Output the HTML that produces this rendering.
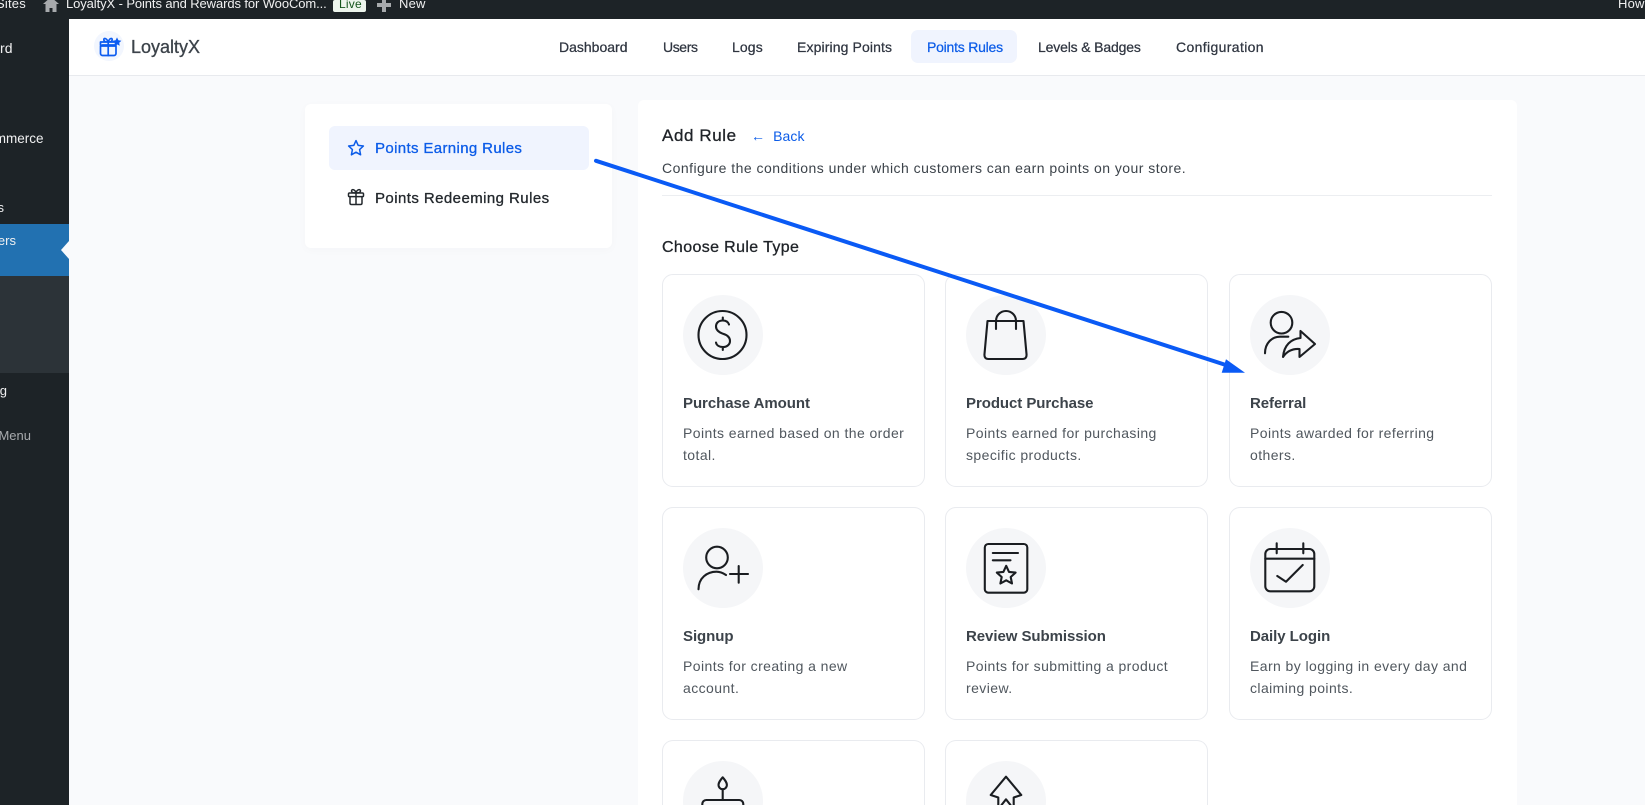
<!DOCTYPE html>
<html lang="en">
<head>
<meta charset="utf-8">
<title>LoyaltyX - Add Rule</title>
<style>
html,body{margin:0;padding:0;width:1645px;height:805px;overflow:hidden;background:#f9fafc;font-family:"Liberation Sans",sans-serif;}
#root{position:relative;width:1645px;height:805px;overflow:hidden;background:#f9fafc;}
.a{position:absolute;white-space:nowrap;}
.ab{position:absolute;left:0;top:0;width:1645px;height:19px;background:#1d2327;overflow:hidden;}
.ab .a{color:#f0f0f1;font-size:13px;line-height:18px;top:-5px;letter-spacing:.2px;}
.side{position:absolute;left:0;top:19px;width:69px;height:786px;background:#1d2327;overflow:hidden;}
.st{position:absolute;white-space:nowrap;color:#f0f0f1;font-size:13px;line-height:18px;right:auto;}
.head{position:absolute;left:69px;top:19px;width:1576px;height:56px;background:#fff;border-bottom:1px solid #e8eaee;}
.nav{position:absolute;top:38px;font-size:14px;line-height:18px;color:#2f3540;white-space:nowrap;-webkit-text-stroke:.25px currentColor;letter-spacing:.12px;}
.pill{position:absolute;left:911px;top:30px;width:106px;height:33px;background:#f0f4fe;border-radius:7px;}
.lcard{position:absolute;left:305px;top:104px;width:307px;height:144px;background:#fff;border-radius:6px;box-shadow:0 2px 10px rgba(30,50,90,.025);}
.lact{position:absolute;left:329px;top:126px;width:260px;height:44px;background:#f0f4fe;border-radius:6px;}
.ltxt{position:absolute;left:375px;font-size:15px;line-height:20px;white-space:nowrap;-webkit-text-stroke:.3px currentColor;letter-spacing:.36px;}
.main{position:absolute;left:638px;top:100px;width:879px;height:705px;background:#fff;border-radius:6px 6px 0 0;}
.card{position:absolute;width:261px;height:211px;background:#fff;border:1px solid #e9ebef;border-radius:11px;}
.card.cut{height:64px;border-bottom:0;border-radius:11px 11px 0 0;overflow:hidden;}
.ic{position:absolute;left:20px;top:20px;width:80px;height:80px;border-radius:50%;background:#f5f6f8;}
.ic svg{position:absolute;left:0;top:0;width:80px;height:80px;fill:none;stroke:#1a1d21;stroke-width:2.1;stroke-linecap:round;stroke-linejoin:round;}
.t{position:absolute;left:20px;top:119px;font-size:15px;line-height:20px;color:#3c434a;font-weight:700;white-space:nowrap;letter-spacing:-.06px;}
.d{position:absolute;left:20px;top:147px;width:240px;font-size:14px;line-height:22px;color:#50575e;letter-spacing:.42px;white-space:nowrap;}
</style>
</head>
<body>
<div id="root">

<div class="ab">
  <span class="a" style="left:-4px;">Sites</span>
  <svg class="a" style="left:43px;top:0;" width="16" height="12" viewBox="0 0 16 12"><path d="M8 -3 L0 4 H2.5 V12 H6.5 V8 H9.5 V12 H13.5 V4 H16 Z" fill="#a7aaad"/></svg>
  <span class="a" style="left:66px;letter-spacing:-.1px;">LoyaltyX - Points and Rewards for WooCom...</span>
  <span class="a" style="left:333px;top:0;width:33px;height:12px;background:#edf5ed;border-radius:2px;"></span>
  <span class="a" style="left:339px;color:#14551c;font-size:12px;">Live</span>
  <svg class="a" style="left:377px;top:0;" width="14" height="12" viewBox="0 0 14 12"><path d="M5 0 H9 V3 H14 V7 H9 V12 H5 V7 H0 V3 H5 Z" fill="#a7aaad"/></svg>
  <span class="a" style="left:399px;">New</span>
  <span class="a" style="left:1618px;">How</span>
</div>

<div class="side">
  <span class="st" style="left:-60px;width:72.5px;text-align:right;top:20px;font-size:14px;">Dashboard</span>
  <span class="st" style="left:-50px;width:92px;text-align:right;top:111px;font-size:13.5px;">WooCommerce</span>
  <span class="st" style="left:-50px;width:54px;text-align:right;top:180px;">Rules</span>
  <div style="position:absolute;left:0;top:205px;width:69px;height:52px;background:#2271b1;"></div>
  <span class="st" style="left:-50px;width:66px;text-align:right;top:213px;">Users</span>
  <div style="position:absolute;left:61px;top:222px;width:0;height:0;border:9px solid transparent;border-left:0;border-right:8px solid #f9fafc;"></div>
  <div style="position:absolute;left:0;top:257px;width:69px;height:97px;background:#2c3338;"></div>
  <span class="st" style="left:-50px;width:57px;text-align:right;top:363px;">Setting</span>
  <span class="st" style="left:-60px;width:91px;text-align:right;top:408px;color:#a7aaad;">Collapse Menu</span>
</div>

<div class="head"></div>
<div class="a" style="left:94px;top:31px;width:30px;height:30px;border-radius:50%;background:#f2f6fe;"></div>
<svg class="a" style="left:96px;top:32px;" width="30" height="28" viewBox="0 0 30 28" fill="none" stroke="#0d5cf0" stroke-width="1.7" stroke-linecap="round" stroke-linejoin="round">
  <rect x="4.5" y="13" width="15.5" height="10.5" rx="2"/>
  <path d="M4.5 13 V10 H20 V13 M4.5 14 H20 M12.2 10 V23.5 M12.2 10 C10 5 7 6 8 8.5 C8.5 10 11 10 12.2 10 C14 5 17 6 16 8.5 C15.5 10 13 10 12.2 10"/>
  <path d="M21 8.4 L22.4 11.2 L25.4 11.7 L23.2 13.8 L23.7 16.8 L21 15.4 L18.3 16.8 L18.8 13.8 L16.6 11.7 L19.6 11.2 Z" fill="#0d5cf0" stroke="none" transform="translate(0 -3)"/>
</svg>
<span class="a" style="left:131px;top:36px;font-size:18px;line-height:22px;color:#3c434a;-webkit-text-stroke:.3px #3c434a;">LoyaltyX</span>

<div class="pill"></div>
<span class="nav" style="left:559px;letter-spacing:0;">Dashboard</span>
<span class="nav" style="left:663px;letter-spacing:-.4px;">Users</span>
<span class="nav" style="left:732px;">Logs</span>
<span class="nav" style="left:797px;">Expiring Points</span>
<span class="nav" style="left:927px;color:#0c5ce8;letter-spacing:-.23px;">Points Rules</span>
<span class="nav" style="left:1038px;letter-spacing:-.16px;">Levels &amp; Badges</span>
<span class="nav" style="left:1176px;letter-spacing:.36px;">Configuration</span>

<div class="lcard"></div>
<div class="lact"></div>
<svg class="a" style="left:347px;top:139px;" width="18" height="18" viewBox="0 0 18 18" fill="none" stroke="#0c5ce8" stroke-width="1.5" stroke-linejoin="round"><path d="M9 1.6 L11.2 6.4 L16.4 7 L12.6 10.6 L13.6 15.8 L9 13.2 L4.4 15.8 L5.4 10.6 L1.6 7 L6.8 6.4 Z"/></svg>
<span class="ltxt" style="top:139px;color:#0c5ce8;">Points Earning Rules</span>
<svg class="a" style="left:347px;top:188px;" width="18" height="18" viewBox="0 0 18 18" fill="none" stroke="#23282d" stroke-width="1.5" stroke-linecap="round" stroke-linejoin="round"><rect x="1.5" y="5" width="15" height="3.6" rx="1"/><path d="M3 8.6 V15 Q3 16.5 4.5 16.5 H13.5 Q15 16.5 15 15 V8.6 M9 5 V16.5 M9 5 C8 1 4.5 .8 4.5 3 C4.5 4.6 7 5 9 5 C10 1 13.5 .8 13.5 3 C13.5 4.6 11 5 9 5"/></svg>
<span class="ltxt" style="top:189px;color:#23282d;letter-spacing:.43px;">Points Redeeming Rules</span>

<div class="main"></div>
<span class="a" style="left:662px;top:126px;font-size:17px;line-height:20px;color:#1f2328;-webkit-text-stroke:.3px #1f2328;letter-spacing:.6px;">Add Rule</span>
<span class="a" style="left:751px;top:126px;font-size:14px;line-height:20px;color:#0c5ce8;letter-spacing:.1px;">←&nbsp; Back</span>
<span class="a" style="left:662px;top:158px;font-size:14px;line-height:20px;color:#3c434a;letter-spacing:.47px;">Configure the conditions under which customers can earn points on your store.</span>
<div class="a" style="left:662px;top:195px;width:830px;height:1px;background:#eceef1;"></div>
<span class="a" style="left:662px;top:238px;font-size:16px;line-height:20px;color:#1f2328;-webkit-text-stroke:.3px #1f2328;letter-spacing:.37px;">Choose Rule Type</span>

<!-- Row 1 -->
<div class="card" style="left:662px;top:274px;">
  <div class="ic"><svg viewBox="0 0 80 80"><circle cx="39.5" cy="40" r="24"/><path d="M46 29.5 C45 26.5 42.5 25.5 39.8 25.5 C35.5 25.5 33 28 33 31.5 C33 35.5 36.5 37.5 40 38.8 C44 40 47 42.5 47 46 C47 49.5 44 52 40 52 C36.5 52 33.5 50.5 33 47.5 M39.8 22.5 V25.5 M39.8 52 V55"/></svg></div>
  <div class="t">Purchase Amount</div>
  <div class="d">Points earned based on the order<br>total.</div>
</div>
<div class="card" style="left:945px;top:274px;">
  <div class="ic"><svg viewBox="0 0 80 80"><path d="M21.5 26 H57.5 L60.5 59 Q61 64 56.5 64 H22.5 Q18 64 18.5 59 Z M30 34 V26 A10 10 0 0 1 50 26 V34"/></svg></div>
  <div class="t">Product Purchase</div>
  <div class="d">Points earned for purchasing<br>specific products.</div>
</div>
<div class="card" style="left:1229px;top:274px;">
  <div class="ic"><svg viewBox="0 0 80 80"><circle cx="31.5" cy="27.7" r="10.8"/><path d="M15 58.3 C15 48 22 41.7 30 41.7 H38.3"/><path d="M65 49 L50.5 36 V43 C41 44 34 50 33 62 C37 56 42 53.5 49.5 54 V62 Z"/></svg></div>
  <div class="t">Referral</div>
  <div class="d">Points awarded for referring<br>others.</div>
</div>

<!-- Row 2 -->
<div class="card" style="left:662px;top:507px;">
  <div class="ic"><svg viewBox="0 0 80 80"><circle cx="34" cy="29.5" r="10.8"/><path d="M15.5 61.3 C15.5 50 24 43.7 33.5 43.7 C37 43.7 40 45 43 47 M47 46 H65 M55.7 38 V54.7"/></svg></div>
  <div class="t">Signup</div>
  <div class="d">Points for creating a new<br>account.</div>
</div>
<div class="card" style="left:945px;top:507px;">
  <div class="ic"><svg viewBox="0 0 80 80"><rect x="18.8" y="16" width="42.5" height="48.7" rx="3.5"/><path d="M26.8 25 H52 M26.8 32.3 H44.5"/><path d="M40.2 37.8 L43 43.9 L49.6 44.6 L44.7 49 L46 55.5 L40.2 52.3 L34.4 55.5 L35.7 49 L30.8 44.6 L37.4 43.9 Z"/></svg></div>
  <div class="t">Review Submission</div>
  <div class="d">Points for submitting a product<br>review.</div>
</div>
<div class="card" style="left:1229px;top:507px;">
  <div class="ic"><svg viewBox="0 0 80 80"><rect x="15.3" y="21" width="49" height="42.3" rx="5"/><path d="M15.3 30.7 H64.3 M26.7 15.3 V25.3 M53.3 15.3 V25.3 M27.3 48 L36 53.7 L52.7 37"/></svg></div>
  <div class="t">Daily Login</div>
  <div class="d">Earn by logging in every day and<br>claiming points.</div>
</div>

<!-- Row 3 -->
<div class="card cut" style="left:662px;top:740px;">
  <div class="ic"><svg viewBox="0 0 80 80"><path d="M39.7 16.3 C37 19.5 35.5 21.5 35.5 24 A4.2 4.2 0 0 0 43.9 24 C43.9 21.5 42.4 19.5 39.7 16.3 Z M39.7 28.3 V39"/><rect x="19.3" y="39" width="41" height="30" rx="4"/></svg></div>
</div>
<div class="card cut" style="left:945px;top:740px;">
  <div class="ic"><svg viewBox="0 0 80 80"><path d="M40 15.7 L24.7 34 L32.3 36.5 V44 M40 15.7 L55.3 34 L47.7 36.5 V44 M35.5 44 L40 38.3 L44.5 44"/></svg></div>
</div>

<!-- Annotation arrow -->
<svg class="a" style="left:0;top:0;pointer-events:none;" width="1645" height="805" viewBox="0 0 1645 805">
  <path d="M596 160.8 L1232 367" stroke="#0a5af5" stroke-width="4" stroke-linecap="round" fill="none"/>
  <path d="M1245 372.7 L1221.7 372.7 L1226 359.3 Z" fill="#0a5af5"/>
</svg>

</div>
</body>
</html>
